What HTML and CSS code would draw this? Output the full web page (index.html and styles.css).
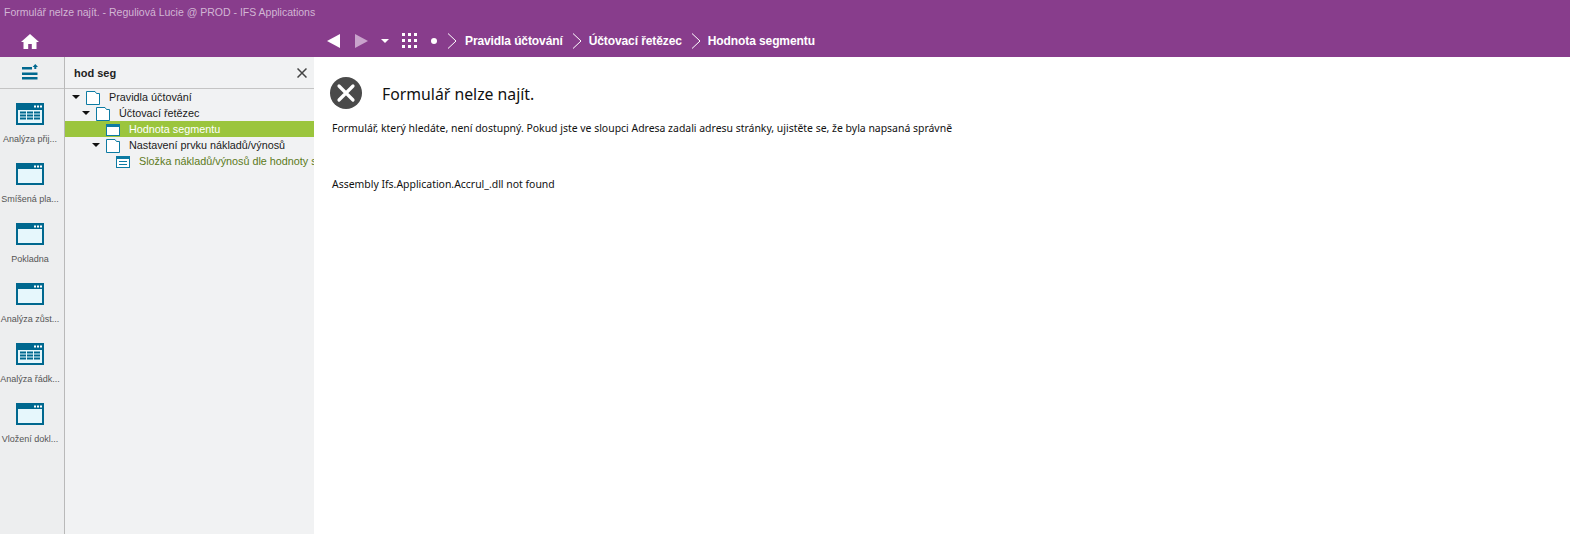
FILE: index.html
```html
<!DOCTYPE html>
<html lang="cs">
<head>
<meta charset="utf-8">
<title>IFS Applications</title>
<link rel="stylesheet" href="styles.css">
</head>
<body>
<svg class="defs" width="0" height="0" aria-hidden="true">
  <symbol id="win" viewBox="0 0 28 22">
    <rect x="1" y="1" width="26" height="20" fill="#e6f7fc" stroke="#00688f" stroke-width="2"/>
    <rect x="1" y="1" width="26" height="5" fill="#00688f"/>
    <path d="M18 2.500h2v2h-2zM21 2.500h2v2h-2zM24 2.500h2v2h-2z" fill="#fff"/>
  </symbol>
  <symbol id="tbl" viewBox="0 0 28 22">
    <rect width="28" height="22" fill="#00688f"/>
    <path d="M18 2.500h2v2h-2zM21 2.500h2v2h-2zM24 2.500h2v2h-2z" fill="#fff"/>
    <rect x="2" y="7" width="24" height="13" fill="#e6f7fc"/>
    <path d="M4 8.500h6v2H4zM11 8.500h6v2h-6zM18 8.500h6v2h-6zM4 11.500h6v2H4zM11 11.500h6v2h-6zM18 11.500h6v2h-6zM4 14.500h6v2H4zM11 14.500h6v2h-6zM18 14.500h6v2h-6z" fill="#00688f"/>
  </symbol>
  <symbol id="folder" viewBox="0 0 14 14">
    <path d="M.5 13.500V.5h8.500l1.500 2h3v11z" fill="#fff" stroke="#0d7ba3"/>
  </symbol>
</svg>
<div class="app">
  <header class="top">
    <div class="title">Formulář nelze najít. - Reguliová Lucie @ PROD - IFS Applications</div>
    <nav class="nav">
      <div class="home-cell">
        <svg class="home" width="18" height="16" viewBox="0 0 18 16"><path d="M9 1 0 9h2.500v7h4.700v-5h3.600v5h4.700V9H18z" fill="#fff"/></svg>
      </div>
      <div class="crumbs">
        <svg class="back" width="13" height="14" viewBox="0 0 13 14"><path d="M13 0v14L0 7z" fill="#fff"/></svg>
        <svg class="fwd" width="13" height="14" viewBox="0 0 13 14"><path d="M0 0v14l13-7z" fill="#c9a3cc"/></svg>
        <svg class="drop" width="8" height="4" viewBox="0 0 8 4"><path d="M0 0h8L4 4z" fill="#fff"/></svg>
        <svg class="grid" width="16" height="16" viewBox="0 0 16 16" fill="#fff"><path d="M0 0h3v3H0zM6 0h3v3H6zM12 0h3v3h-3zM0 6h3v3H0zM6 6h3v3H6zM12 6h3v3h-3zM0 12h3v3H0zM6 12h3v3H6zM12 12h3v3h-3z"/></svg>
        <span class="dot"></span>
        <svg class="chev first" width="10" height="16" viewBox="0 0 10 16"><path d="M1 .5 9 8l-8 7.500" fill="none" stroke="#fff"/></svg>
        <span class="crumb">Pravidla účtování</span>
        <svg class="chev" width="10" height="16" viewBox="0 0 10 16"><path d="M1 .5 9 8l-8 7.500" fill="none" stroke="#fff"/></svg>
        <span class="crumb">Účtovací řetězec</span>
        <svg class="chev" width="10" height="16" viewBox="0 0 10 16"><path d="M1 .5 9 8l-8 7.500" fill="none" stroke="#fff"/></svg>
        <span class="crumb">Hodnota segmentu</span>
      </div>
    </nav>
  </header>
  <div class="body">
    <aside class="rail">
      <div class="rail-head">
        <svg width="16" height="16" viewBox="0 0 16 16" fill="#00688f"><path d="M0 3h10v2.500H0zM0 8.500h15.500V11H0zM0 13h15.500v2.500H0zM13.250 0 16 3h-1.700v2h-2V3h-1.700z"/></svg>
      </div>
      <div class="shortcut"><svg class="ico"><use href="#tbl"/></svg><span>Analýza přij...</span></div>
      <div class="shortcut"><svg class="ico"><use href="#win"/></svg><span>Smíšená pla...</span></div>
      <div class="shortcut"><svg class="ico"><use href="#win"/></svg><span>Pokladna</span></div>
      <div class="shortcut"><svg class="ico"><use href="#win"/></svg><span>Analýza zůst...</span></div>
      <div class="shortcut"><svg class="ico"><use href="#tbl"/></svg><span>Analýza řádk...</span></div>
      <div class="shortcut"><svg class="ico"><use href="#win"/></svg><span>Vložení dokl...</span></div>
    </aside>
    <section class="tree-pane">
      <div class="search">
        <span class="query">hod seg</span>
        <svg width="10" height="10" viewBox="0 0 10 10"><path d="M.5.500l9 9M9.500.500l-9 9" stroke="#444" stroke-width="1.500"/></svg>
      </div>
      <ul class="tree">
        <li class="node l0"><i class="tw"></i><svg class="ni"><use href="#folder"/></svg><span>Pravidla účtování</span></li>
        <li class="node l1"><i class="tw"></i><svg class="ni"><use href="#folder"/></svg><span>Účtovací řetězec</span></li>
        <li class="node l2 sel"><i class="tw none"></i><svg class="ni" viewBox="0 0 14 14"><rect x=".5" y="1.500" width="13" height="11" fill="#fff" stroke="#0d7ba3"/><rect x="1" y="2" width="12" height="2" fill="#0d7ba3"/></svg><span>Hodnota segmentu</span></li>
        <li class="node l2"><i class="tw"></i><svg class="ni"><use href="#folder"/></svg><span>Nastavení prvku nákladů/výnosů</span></li>
        <li class="node l3 leaf"><i class="tw none"></i><svg class="ni" viewBox="0 0 14 14"><rect x=".5" y="1.500" width="13" height="11" fill="#fff" stroke="#0d7ba3"/><path d="M1 2h12v2H1zM3 6h8v1H3zM3 9h8v1H3z" fill="#0d7ba3"/></svg><span>Složka nákladů/výnosů dle hodnoty segmentu</span></li>
      </ul>
    </section>
    <main class="content">
      <div class="err-head">
        <svg width="32" height="32" viewBox="0 0 32 32"><circle cx="16" cy="16" r="16" fill="#4a4a4a"/><path d="M9 9l14 14M23 9 9 23" stroke="#fff" stroke-width="3.200" stroke-linecap="round"/></svg>
        <h1>Formulář nelze najít.</h1>
      </div>
      <p class="msg">Formulář, který hledáte, není dostupný. Pokud jste ve sloupci Adresa zadali adresu stránky, ujistěte se, že byla napsaná správně</p>
      <p class="detail">Assembly Ifs.Application.Accrul_.dll not found</p>
    </main>
  </div>
</div>
</body>
</html>
```
FILE: styles.css
```css
* { box-sizing: border-box; }
html, body { margin: 0; height: 100%; }
body { font-family: "Liberation Sans", Arial, sans-serif; background: #fff; overflow: hidden; }
.defs { position: absolute; }
.app { display: flex; flex-direction: column; height: 534px; width: 1570px; }
.top { background: #883d8c; height: 57px; flex: none; }
.title { height: 24px; padding: 5px 0 0 4px; font-size: 10.500px; line-height: 14px; color: #d2b6d4; }
.nav { display: flex; height: 33px; align-items: center; }
.home-cell { width: 60px; display: flex; justify-content: center; }
.crumbs { display: flex; align-items: center; margin-left: 267px; color: #fff; font-weight: bold; font-size: 12px; letter-spacing: -0.1px; }
.back { margin-right: 15px; }
.fwd { margin-right: 13px; }
.drop { margin-right: 13px; }
.grid { margin-right: 13px; }
.dot { width: 6px; height: 6px; border-radius: 50%; background: #fff; margin-right: 10px; }
.chev { margin: 0 7px 0 9px; }
.chev.first { margin-left: 0; margin-right: 8px; }
.crumb { white-space: nowrap; }
.body { display: flex; flex: 1; min-height: 0; }
.rail { width: 65px; flex: none; background: #edeeef; border-right: 1px solid #b9b9b9; }
.rail-head { height: 32px; width: 64px; border-bottom: 1px solid #c4c4c4; display: flex; justify-content: center; align-items: center; padding: 0 4px 2px 0; }
.shortcut { height: 60px; width: 60px; display: flex; flex-direction: column; align-items: center; padding-top: 14px; }
.ico { width: 28px; height: 22px; display: block; flex: none; }
.shortcut span { display: block; margin-top: 8px; font-size: 9px; line-height: 12px; color: #555; white-space: nowrap; }
.tree-pane { width: 249px; flex: none; background: #f1f2f3; overflow: hidden; }
.search { height: 32px; border-bottom: 1px solid #c4c4c4; display: flex; align-items: center; justify-content: space-between; padding: 0 7px 0 9px; }
.query { font-weight: bold; font-size: 11px; color: #222; }
.tree { list-style: none; margin: 0; padding: 0; }
.node { height: 16px; display: flex; align-items: center; font-size: 10.800px; color: #1a1a1a; white-space: nowrap; }
.node.l0 { padding-left: 7px; }
.node.l1 { padding-left: 17px; }
.node.l2 { padding-left: 27px; }
.node.l3 { padding-left: 37px; }
.tw { width: 0; height: 0; border-left: 4px solid transparent; border-right: 4px solid transparent; border-top: 4px solid #111; flex: none; margin-right: 6px; }
.tw.none { border-color: transparent; }
.ni { width: 14px; height: 14px; flex: none; margin: 1px 9px 0 0; }
.sel { background: #9bc53d; color: #fff; }
.leaf { color: #5c7a1a; }
.content { flex: 1; padding: 20px 16px; color: #111; }
.err-head { display: flex; align-items: flex-start; gap: 20px; height: 32px; }
.err-head h1 { margin: 0; padding-top: 1px; font-weight: normal; font-size: 15.800px; line-height: 32px; font-family: "Noto Sans", sans-serif; }
.msg, .detail { margin: 0; font-size: 10.450px; line-height: 14px; font-family: "Noto Sans", sans-serif; }
.msg { margin: 12px 0 0 2px; }
.detail { margin: 42px 0 0 2px; }
```
